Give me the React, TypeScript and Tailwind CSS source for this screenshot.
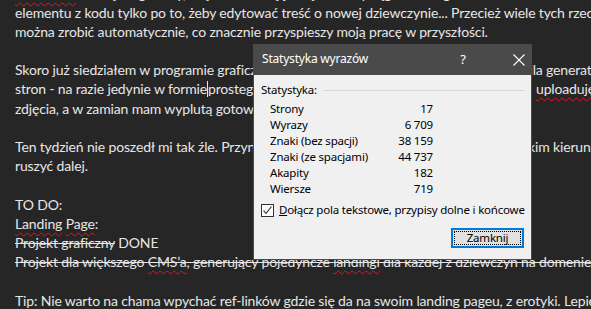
import React from "react";

const sq = "underline decoration-wavy decoration-[#e81123] decoration-[1px] underline-offset-[3px]";

function Line({ children }: { children?: React.ReactNode }) {
  return <div className="h-[19.2px] leading-[19.2px] whitespace-nowrap flex">{children ?? "\u00a0"}</div>;
}

export default function App() {
  return (
    <div className="relative w-[591px] h-[309px] overflow-hidden bg-[#262626] text-[#e6e6e6]">
      <div className="mt-[-16.5px] pl-[15px] text-[14px] tracking-[-0.15px]" style={{ fontFamily: "Lato, 'Open Sans', sans-serif" }}>
        <Line><span><span className={sq}>Generator</span> stron jest gotowy, więc nie muszę już ręcznie wyciągać każdego</span></Line>
        <Line>elementu z kodu tylko po to, żeby edytować treść o nowej dziewczynie... Przecież wiele tych rzeczy</Line>
        <Line>można zrobić automatycznie, co znacznie przyspieszy moją pracę w przyszłości.</Line>
        <Line />
        <Line>
          <span className="w-[510px] shrink-0 overflow-hidden">Skoro już siedziałem w programie graficznym, to przygotowałem sobie</span>
          <span>dla generatora</span>
        </Line>
        <Line>
          <span className="w-[521px] shrink-0 overflow-hidden">
            stron - na razie jedynie w formie<span className="inline-block w-px h-[16px] bg-[#e6e6e6] align-[-3px]"></span>prostego skryptu w PHP, do którego
          </span>
          <span className={sq}>uploaduję</span>
        </Line>
        <Line>zdjęcia, a w zamian mam wyplutą gotową stronę.</Line>
        <Line />
        <Line>
          <span className="w-[503px] shrink-0 overflow-hidden">Ten tydzień nie poszedł mi tak źle. Przynajmniej już wiem, w</span>
          <span>jakim kierunku</span>
        </Line>
        <Line>ruszyć dalej.</Line>
        <Line />
        <Line>TO DO:</Line>
        <Line><span><span className={sq}>Landing</span> <span className={sq}>Page</span>:</span></Line>
        <Line><span><span className="line-through">Projekt graficzny</span> DONE</span></Line>
        <Line>
          <span className="line-through">
            Projekt dla większego <span className={sq}>CMS’a</span>, generujący pojedyncze <span className={sq}>landingi</span> dla każdej z dziewczyn na domenie
          </span>
        </Line>
        <Line />
        <Line>
          <span>
            <span className={sq}>Tip</span>: Nie warto na chama wpychać ref-<span className="underline decoration-double decoration-[#3b8eea] underline-offset-[3px]">linków</span> gdzie się da na swoim <span className={sq}>landing</span> <span className={sq}>pageu</span>, z erotyki. Lepiej
          </span>
        </Line>
      </div>

      <div
        className="absolute left-[253px] top-[44px] w-[279px] h-[216px] bg-[#f0f0f0] border border-[#4a4a4a] flex flex-col text-[11.5px] tracking-[-0.2px] text-black"
        style={{ fontFamily: "'Noto Sans', 'Open Sans', sans-serif" }}
      >
        <div className="h-[30px] shrink-0 bg-[#4a4a4a] flex items-center pl-[8px] text-white text-[12px]">
          <span className="flex-1 pb-[2px]">Statystyka wyrazów</span>
          <span className="w-[20px] text-center text-[13px] mr-[40px]">?</span>
          <svg width="12" height="12" viewBox="0 0 12 12" className="mr-[6px]">
            <path d="M0.5 0.5 L11.5 11.5 M11.5 0.5 L0.5 11.5" stroke="#ffffff" strokeWidth="1.1" fill="none" />
          </svg>
        </div>
        <div className="flex flex-col pl-[7px] pr-[6px] pt-[7px]">
          <div className="flex items-center h-[16px]">
            <span>Statystyka:</span>
            <div className="flex-1 h-px bg-[#d8d8d8] ml-[6px] mt-[1px]"></div>
          </div>
          <div className="flex flex-col pl-[9px] pt-[3px] w-[172px]">
            {[
              ["Strony", "17"],
              ["Wyrazy", "6 709"],
              ["Znaki (bez spacji)", "38 159"],
              ["Znaki (ze spacjami)", "44 737"],
              ["Akapity", "182"],
              ["Wiersze", "719"],
            ].map(([k, v]) => (
              <div key={k} className="flex justify-between h-[16px] leading-[16px]">
                <span>{k}</span>
                <span>{v}</span>
              </div>
            ))}
          </div>
          <div className="flex items-center mt-[5px] h-[16px]">
            <div className="w-[13px] h-[13px] shrink-0 border border-[#333333] bg-white flex items-center justify-center">
              <svg width="11" height="11" viewBox="0 0 11 11">
                <path d="M1.5 5.5 L4 8.5 L9.5 1.5" stroke="#222" strokeWidth="1.1" fill="none" />
              </svg>
            </div>
            <span className="ml-[5px] whitespace-nowrap"><span className="underline">D</span>ołącz pola tekstowe, przypisy dolne i końcowe</span>
          </div>
          <div className="flex justify-end mt-[10px] pr-[1px]">
            <div className="w-[73px] h-[20px] border-2 border-[#0078d7] bg-[#e1e1e1] p-px">
              <div className="w-full h-full border border-dotted border-black flex items-center justify-center leading-none">
                Zamknij
              </div>
            </div>
          </div>
        </div>
      </div>
    </div>
  );
}
